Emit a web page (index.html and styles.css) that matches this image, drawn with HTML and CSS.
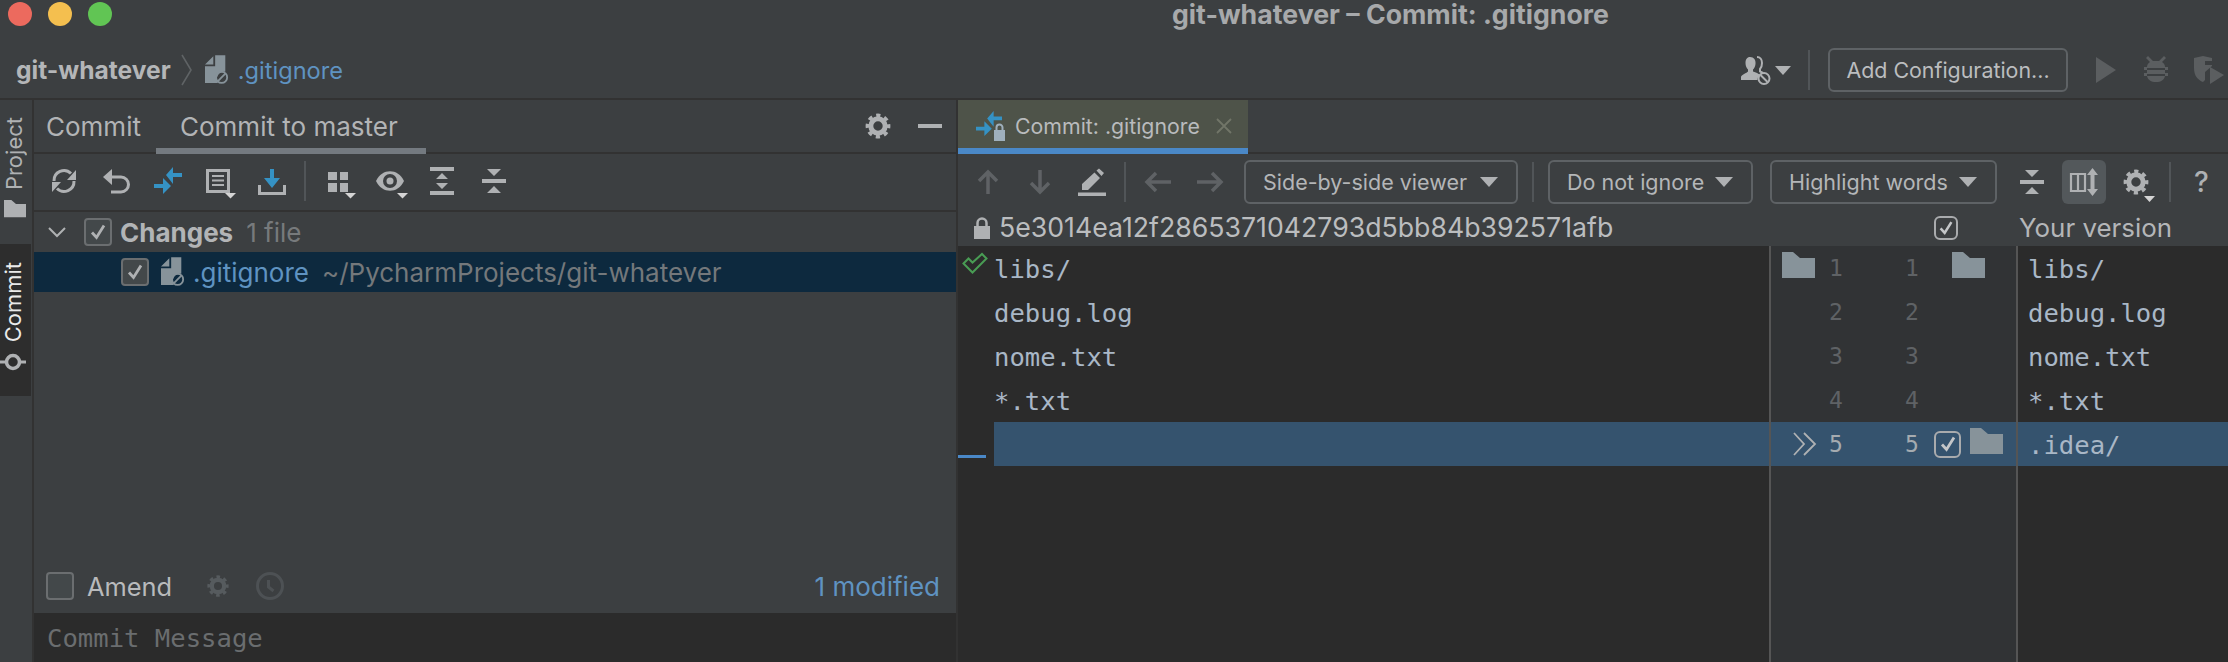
FILE: index.html
```html
<!DOCTYPE html>
<html lang="en">
<head>
<meta charset="utf-8">
<title>git-whatever – Commit: .gitignore</title>
<link rel="stylesheet" href="styles.css">
</head>
<body>
<svg class="defs" width="0" height="0" aria-hidden="true">
  <symbol id="gear" viewBox="0 0 28 28"><circle cx="14" cy="14" r="7.2" fill="none" stroke="currentColor" stroke-width="5"/><circle cx="14" cy="14" r="10.6" fill="none" stroke="currentColor" stroke-width="3.6" stroke-dasharray="4.2 4.12" stroke-dashoffset="2.1"/></symbol>
  <symbol id="folder" viewBox="0 0 33 27"><path d="M0 26V0h11l7 6h15v20z" fill="currentColor"/></symbol>
  <symbol id="check" viewBox="0 0 20 20"><path d="M4 10.5l4.5 5L16 3.5" fill="none" stroke="currentColor" stroke-width="2.8"/></symbol>
  <symbol id="file" viewBox="0 0 26 32"><path d="M0 10L9 1v9zM11 0h11v18a8 8 0 0 0-8 12H0V12h11z" fill="#87939a"/><circle cx="18" cy="24" r="6" fill="none" stroke="#87939a" stroke-width="2"/><path d="M14 28l8-8" stroke="#87939a" stroke-width="2"/></symbol>
  <symbol id="arrows" viewBox="0 0 28 28"><path d="M12 8l7-8v6h9v4h-9v7zM0 17h9v-6l8 8-8 8v-6H0z" fill="currentColor"/></symbol>
</svg>

<header class="titlebar">
  <span class="light red"></span><span class="light amber"></span><span class="light green"></span>
  <span class="window-title">git-whatever – Commit: .gitignore</span>
</header>

<nav class="navbar">
  <span class="crumb-root">git-whatever</span>
  <svg class="crumb-sep" width="12" height="32" viewBox="0 0 12 32"><path d="M1 1l9 15-9 15" fill="none" stroke="#5f6365" stroke-width="1.6"/></svg>
  <svg class="file-icon" width="24" height="30"><use href="#file"/></svg>
  <span class="file-name">.gitignore</span>
  <span class="nav-right">
    <svg width="30" height="30" viewBox="0 0 30 30"><path d="M9 2c4 0 6 3 5.500 7-.3 3-1.500 4.500-2.500 5.500v2c3 1 5.500 2 7 3.500-2 1-2.500 3-2.500 5H0v-3c0-2 6-4 7-5.500v-2C5.500 13 4.500 11 4.500 8 4.500 4.500 6 2 9 2z" fill="#afb1b3"/><path d="M16 2c3 0 5 2.500 5 6 0 3-1 5-2 6v2.500l3 1.500" fill="none" stroke="#afb1b3" stroke-width="2"/><circle cx="23" cy="23.500" r="5.500" fill="#3c3f41" stroke="#afb1b3" stroke-width="2"/><path d="M19.500 20l7 7" stroke="#afb1b3" stroke-width="2"/></svg>
    <svg class="nav-caret" width="16" height="9" viewBox="0 0 16 9"><path d="M0 0h16l-8 9z" fill="#afb1b3"/></svg>
    <i class="vsep nav-sep"></i>
    <span class="config-btn">Add Configuration...</span>
    <svg class="run" width="20" height="26" viewBox="0 0 20 26"><path d="M0 0l20 13L0 26z" fill="#5b5e60"/></svg>
    <svg class="debug" width="24" height="28" viewBox="0 0 24 28"><path d="M4 0l5 5h6l5-5 2 2-4 4c2 1 3 3 3 5h3v3h-3v3h3v3h-3c-1 4-4 6-9 6s-8-2-9-6H0v-3h3v-3H0v-3h3c0-2 1-4 3-5L2 2z" fill="#5b5e60"/><path d="M3 13h18M3 19h18" stroke="#3c3f41" stroke-width="2"/></svg>
    <svg class="coverage" width="30" height="28" viewBox="0 0 30 28"><path d="M0 2l9-2 9 2v3h-7v4h7v1l-7 6v8l-2 2C4 24 0 20 0 12z" fill="#5b5e60"/><path d="M16 11l14 8-14 9z" fill="#5b5e60"/></svg>
  </span>
</nav>

<main class="workspace">
  <aside class="stripe">
    <div class="stripe-item">
      <span class="stripe-label">Project</span>
      <svg class="stripe-folder" width="22" height="18"><use href="#folder"/></svg>
    </div>
    <div class="stripe-item active">
      <span class="stripe-label">Commit</span>
      <svg class="stripe-commit" width="26" height="18" viewBox="0 0 26 18"><path d="M0 9h6M20 9h6" stroke="#afb1b3" stroke-width="3"/><circle cx="13" cy="9" r="6.500" fill="none" stroke="#afb1b3" stroke-width="3.500"/></svg>
    </div>
  </aside>

  <section class="commit-panel">
    <div class="tabs">
      <span class="tab plain">Commit</span>
      <span class="tab current">Commit to master</span>
      <svg class="panel-gear" width="28" height="28"><use href="#gear"/></svg>
      <i class="panel-min"></i>
    </div>
    <div class="toolbar left-tools">
      <span class="btn"><svg width="28" height="28" viewBox="0 0 28 28"><path d="M4 14a10 10 0 0 1 17-7.500M24 14a10 10 0 0 1-17 7.500" fill="none" stroke="#afb1b3" stroke-width="3"/><path d="M26 3v10h-9zM2 25V15h9z" fill="#afb1b3"/></svg></span>
      <span class="btn"><svg width="28" height="28" viewBox="0 0 28 28"><path d="M9 10h10a7.500 7.500 0 0 1 0 15H9" fill="none" stroke="#afb1b3" stroke-width="3"/><path d="M1 10l9-8v16z" fill="#afb1b3"/></svg></span>
      <span class="btn blue"><svg width="28" height="28"><use href="#arrows"/></svg></span>
      <span class="btn"><svg width="28" height="28" viewBox="0 0 28 28"><path d="M1.500 3.500h21v21h-21z" fill="none" stroke="#afb1b3" stroke-width="3"/><path d="M6 9h12M6 13.500h12M6 18h12" stroke="#afb1b3" stroke-width="2"/><path d="M19 26h11l-5.500 5.500z" fill="#d4d4d4"/></svg></span>
      <span class="btn"><svg width="28" height="28" viewBox="0 0 28 28"><path d="M1.500 18v8.500h25V18" fill="none" stroke="#afb1b3" stroke-width="3"/><path d="M12 2h4v9h6l-8 10-8-10h6z" fill="#3592c4"/></svg></span>
      <i class="vsep left-sep"></i>
      <span class="btn"><svg width="28" height="28" viewBox="0 0 28 28"><path d="M4 5h9v8H4zM16 5h8v8h-8zM4 16h9v9H4zM16 16h8v9h-8z" fill="#afb1b3"/><path d="M21 26h11l-5.500 5.500z" fill="#d4d4d4"/></svg></span>
      <span class="btn"><svg width="28" height="28" viewBox="0 0 28 28"><path d="M0 14C6 1 22 1 28 14 22 27 6 27 0 14z" fill="#afb1b3"/><circle cx="14" cy="14" r="7" fill="#3c3f41"/><circle cx="14" cy="14" r="3.500" fill="#afb1b3"/><path d="M21 26h11l-5.500 5.500z" fill="#d4d4d4"/></svg></span>
      <span class="btn"><svg width="28" height="28" viewBox="0 0 28 28"><path d="M2 0h24v4H2zM2 24h24v4H2zM14 6l6 6H8zM8 16h12l-6 6z" fill="#afb1b3"/></svg></span>
      <span class="btn"><svg width="28" height="28" viewBox="0 0 28 28"><path d="M2 12h24v4H2zM7 2h14l-7 7zM14 19l7 7H7z" fill="#afb1b3"/></svg></span>
    </div>
    <div class="tree">
      <div class="tree-row group-row">
        <svg class="chev" width="18" height="10" viewBox="0 0 18 10"><path d="M1 1l8 8 8-8" fill="none" stroke="#afb1b3" stroke-width="2"/></svg>
        <span class="cb filled"><svg width="20" height="20"><use href="#check"/></svg></span>
        <b class="group-name">Changes</b>
        <span class="group-count">1 file</span>
      </div>
      <div class="tree-row selected">
        <span class="cb filled"><svg width="20" height="20"><use href="#check"/></svg></span>
        <svg class="tree-file" width="24" height="30"><use href="#file"/></svg>
        <span class="tree-name">.gitignore</span>
        <span class="tree-path">~/PycharmProjects/git-whatever</span>
      </div>
    </div>
    <div class="amend">
      <span class="cb empty"></span>
      <span class="amend-label">Amend</span>
      <svg class="amend-gear" width="24" height="24"><use href="#gear"/></svg>
      <svg class="amend-clock" width="28" height="28" viewBox="0 0 28 28"><circle cx="14" cy="14" r="12.500" fill="none" stroke="#4d5154" stroke-width="3"/><path d="M12.500 8v7l5 4" fill="none" stroke="#4d5154" stroke-width="3"/></svg>
      <span class="modified">1 modified</span>
    </div>
    <div class="message">Commit Message</div>
  </section>

  <section class="diff-panel">
    <div class="tabs">
      <span class="editor-tab">
        <svg class="tab-icon" width="30" height="30" viewBox="0 0 30 30"><use href="#arrows" width="26" height="26"/><path d="M18 19h11v11H18z" fill="#9fb0bd"/><path d="M20.500 19v-2.500a3 3 0 0 1 6 0V19" fill="none" stroke="#9fb0bd" stroke-width="2"/></svg>
        <span class="tab-text">Commit: .gitignore</span>
        <svg class="tab-close" width="16" height="16" viewBox="0 0 16 16"><path d="M1 1l14 14M15 1L1 15" stroke="#717568" stroke-width="1.800"/></svg>
      </span>
    </div>
    <div class="toolbar right-tools">
      <span class="dbtn"><svg width="28" height="28" viewBox="0 0 28 28"><path d="M14 26V5M5 13l9-9 9 9" fill="none" stroke="#5f6265" stroke-width="3.500"/></svg></span>
      <span class="dbtn"><svg width="28" height="28" viewBox="0 0 28 28"><path d="M14 2v21M5 15l9 9 9-9" fill="none" stroke="#5f6265" stroke-width="3.500"/></svg></span>
      <span class="dbtn"><svg width="28" height="28" viewBox="0 0 28 28"><path d="M0 24.500h28V28H0zM4 22v-6L16.500 4.500l5.500 5.500L10 22zM18.500 2.500l2.500-2 5 4.500-2.500 3z" fill="#afb1b3"/></svg></span>
      <i class="vsep tool-sep"></i>
      <span class="dbtn"><svg width="28" height="28" viewBox="0 0 28 28"><path d="M27 14H4M12 5l-9 9 9 9" fill="none" stroke="#5f6265" stroke-width="3.500"/></svg></span>
      <span class="dbtn"><svg width="28" height="28" viewBox="0 0 28 28"><path d="M1 14h23M16 5l9 9-9 9" fill="none" stroke="#5f6265" stroke-width="3.500"/></svg></span>
      <span class="combo viewer">Side-by-side viewer<svg width="18" height="10" viewBox="0 0 18 10"><path d="M0 0h18L9 10z" fill="#afb1b3"/></svg></span>
      <i class="vsep combo-sep"></i>
      <span class="combo ignore">Do not ignore<svg width="18" height="10" viewBox="0 0 18 10"><path d="M0 0h18L9 10z" fill="#afb1b3"/></svg></span>
      <span class="combo words">Highlight words<svg width="18" height="10" viewBox="0 0 18 10"><path d="M0 0h18L9 10z" fill="#afb1b3"/></svg></span>
      <span class="rbtn first"><svg width="28" height="28" viewBox="0 0 28 28"><path d="M2 12h24v4H2zM7 2h14l-7 7zM14 19l7 7H7z" fill="#afb1b3"/></svg></span>
      <span class="rbtn on"><svg width="32" height="30" viewBox="0 0 32 30"><path d="M3 7h14v17H3zM10 7v17" fill="none" stroke="#afb1b3" stroke-width="2.200"/><path d="M24.500 1l5.500 7h-3.500v14H30l-5.500 7-5.500-7h3.500V8H19z" fill="#afb1b3"/></svg></span>
      <span class="rbtn gear"><svg width="28" height="28"><use href="#gear"/></svg><svg class="gear-caret" width="11" height="6" viewBox="0 0 11 6"><path d="M0 0h11L5.500 6z" fill="#d4d4d4"/></svg></span>
      <i class="vsep help-sep"></i>
      <span class="help">?</span>
    </div>
    <div class="versions">
      <div class="base">
        <svg width="16" height="22" viewBox="0 0 16 22"><path d="M0 9h16v13H0z" fill="#afb1b3"/><path d="M3.500 10V6a4.500 4.500 0 0 1 9 0v4" fill="none" stroke="#afb1b3" stroke-width="2.500"/></svg>
        <span class="hash">5e3014ea12f2865371042793d5bb84b392571afb</span>
      </div>
      <div class="mid"><span class="cb outline small"><svg width="18" height="18"><use href="#check"/></svg></span></div>
      <div class="yours">Your version</div>
    </div>
    <div class="editor">
      <div class="pane base-pane">
        <div class="line"><span class="marker"><svg width="26" height="21" viewBox="0 0 26 21"><path d="M1.500 10.500l5-5 4 4L20 1l4.500 4.500L10.500 19.500z" fill="none" stroke="#499c54" stroke-width="2"/></svg></span><span class="code">libs/</span></div>
        <div class="line"><span class="marker"></span><span class="code">debug.log</span></div>
        <div class="line"><span class="marker"></span><span class="code">nome.txt</span></div>
        <div class="line"><span class="marker"></span><span class="code">*.txt</span></div>
        <div class="line"><span class="marker"><i class="caret-mark"></i></span><span class="code hl"></span></div>
      </div>
      <div class="gutter">
        <div class="gline"><span class="gl-left"><svg width="33" height="27"><use href="#folder"/></svg></span><span class="num">1</span><span class="num">1</span><span class="gl-right with-folder"><svg width="33" height="27"><use href="#folder"/></svg></span></div>
        <div class="gline"><span class="gl-left"></span><span class="num">2</span><span class="num">2</span><span class="gl-right"></span></div>
        <div class="gline"><span class="gl-left"></span><span class="num">3</span><span class="num">3</span><span class="gl-right"></span></div>
        <div class="gline"><span class="gl-left"></span><span class="num">4</span><span class="num">4</span><span class="gl-right"></span></div>
        <div class="gline hl"><span class="gl-left"><svg class="apply" width="23" height="24" viewBox="0 0 23 24"><path d="M1 1l10 11L1 23M11 1l11 11-11 11" fill="none" stroke="#afb1b3" stroke-width="1.800"/></svg></span><span class="num">5</span><span class="num">5</span><span class="gl-right with-box"><span class="cb outline"><svg width="20" height="20"><use href="#check"/></svg></span><svg class="row-folder" width="33" height="27"><use href="#folder"/></svg></span></div>
      </div>
      <div class="pane your-pane">
        <div class="line"><span class="code">libs/</span></div>
        <div class="line"><span class="code">debug.log</span></div>
        <div class="line"><span class="code">nome.txt</span></div>
        <div class="line"><span class="code">*.txt</span></div>
        <div class="line"><span class="code hl">.idea/</span></div>
      </div>
    </div>
  </section>
</main>
</body>
</html>
```

FILE: styles.css
```css
* { box-sizing: border-box; }
html, body { margin: 0; height: 100%; }
body {
  width: 2228px; height: 662px; overflow: hidden;
  background: #3c3f41; color: #afb1b3;
  font-family: Inter, "Liberation Sans", sans-serif; font-size: 26px;
}
.defs { position: absolute; }
svg { display: block; flex: none; overflow: visible; }

.titlebar { display: flex; align-items: center; height: 28px; padding-left: 8px; gap: 16px; }
.light { width: 24px; height: 24px; border-radius: 50%; }
.red { background: #ec6a5e; } .amber { background: #f4bf4f; } .green { background: #61c554; }
.window-title { margin-left: 1044px; font-weight: 700; font-size: 26.7px; color: #a7a9ab; white-space: nowrap; line-height: 26px; }

.navbar { display: flex; align-items: center; height: 72px; padding: 14px 0 0 16px; border-bottom: 2px solid #323232; }
.crumb-root { font-weight: 700; font-size: 24.6px; color: #b4b6b8; }
.crumb-sep { margin-left: 10px; }
.file-icon { margin-left: 12px; }
.file-name { margin-left: 9px; font-size: 23.6px; color: #5f93c1; }
.nav-right { margin-left: auto; display: flex; align-items: center; }
.nav-caret { margin-left: 4px; }
.vsep { display: block; width: 2px; background: #515558; flex: none; }
.nav-sep { height: 40px; margin-left: 17px; }
.config-btn { width: 240px; height: 44px; margin-left: 18px; border: 2px solid #5e6265; border-radius: 6px; display: flex; align-items: center; justify-content: center; white-space: nowrap; font-size: 21.4px; color: #bbbdbf; }
.run { margin-left: 28px; } .debug { margin-left: 28px; } .coverage { margin: 0 4px 0 26px; }

.workspace { display: grid; grid-template-columns: 34px 924px 1fr; height: 562px; }
.stripe { border-right: 2px solid #323232; display: flex; flex-direction: column; }
.stripe-item { display: flex; flex-direction: column; align-items: center; height: 118px; padding: 17px 5px 0 0; }
.stripe-label { writing-mode: vertical-rl; transform: rotate(180deg); font-size: 22px; line-height: 22px; white-space: nowrap; }
.stripe-folder { margin: auto -3px 0 0; color: #afb1b3; }
.stripe-item.active { margin: 26px -2px 0 0; padding: 18px 5px 25px 0; height: 152px; width: 31px; background: #2d2d2d; }
.stripe-item.active .stripe-label { color: #eaeaea; }
.stripe-commit { margin: auto 0 0 0; }

.commit-panel { display: flex; flex-direction: column; border-right: 2px solid #323232; min-width: 0; }
.tabs { display: flex; align-items: center; height: 54px; border-bottom: 2px solid #323232; flex: none; }
.tab { white-space: nowrap; color: #b2b4b6; }
.tab.plain { padding: 0 0 0 12px; width: 122px; }
.tab.current { width: 270px; height: 54px; margin-bottom: -2px; padding: 4px 0 0 24px; display: flex; align-items: center; border-bottom: 6px solid #747a80; }
.panel-gear { margin-left: auto; color: #afb1b3; }
.panel-min { display: block; width: 24px; height: 4px; background: #afb1b3; margin: 0 14px 0 26px; }

.toolbar { display: flex; align-items: center; flex: none; }
.left-tools { height: 58px; padding: 0 0 2px 4px; border-bottom: 2px solid #323232; }
.btn { width: 52px; display: flex; justify-content: center; }
.btn.blue { color: #3592c4; }
.left-sep { height: 40px; margin: 0 6px; }

.tree { flex: 1; }
.tree-row { display: flex; align-items: center; height: 40px; white-space: nowrap; }
.group-row { padding-left: 14px; }
.chev { margin-right: 18px; }
.cb { display: flex; align-items: center; justify-content: center; width: 28px; height: 28px; border-radius: 4px; border: 2px solid #6b6e70; flex: none; }
.cb.filled { background: #43484a; color: #afb1b3; }
.cb.empty { background: #43484a; }
.cb.outline { border-color: #a9abad; color: #c4c6c8; width: 27px; height: 27px; border-radius: 6px; }
.cb.small { width: 24px; height: 24px; }
.group-name { margin-left: 8px; color: #b2b4b6; }
.group-count { margin-left: 13px; color: #777a7c; }
.selected { background: #0d293e; padding-left: 87px; }
.tree-file { margin-left: 12px; }
.tree-name { margin-left: 8px; color: #5f93c1; }
.tree-path { margin-left: 13px; color: #74787b; }

.amend { display: flex; align-items: center; height: 54px; padding: 0 16px 0 12px; flex: none; }
.amend-label { margin-left: 13px; font-size: 25.4px; color: #b8babc; }
.amend-gear { margin-left: 34px; color: #565b5e; }
.amend-clock { margin-left: 26px; }
.modified { margin-left: auto; color: #5f93c1; }
.message { height: 49px; background: #2b2b2b; padding: 10px 0 0 13px; font: 25.6px/30px "DejaVu Sans Mono", monospace; color: #6a6d6f; flex: none; }

.diff-panel { display: flex; flex-direction: column; min-width: 0; }
.editor-tab { display: flex; align-items: center; width: 290px; height: 54px; margin-bottom: -2px; padding: 4px 0 0 18px; background: #4e5349; border-bottom: 6px solid #4a88c7; }
.tab-icon { color: #3592c4; }
.tab-text { margin-left: 9px; font-size: 21.3px; color: #b9bbbd; white-space: nowrap; }
.tab-close { margin-left: auto; margin-right: 16px; }

.right-tools { height: 56px; padding-left: 4px; font-size: 21.5px; }
.dbtn { width: 52px; display: flex; justify-content: center; }
.tool-sep { height: 40px; margin: 0 6px; }
.combo { display: flex; align-items: center; justify-content: space-between; height: 44px; padding: 0 18px 0 17px; border: 2px solid #5e6265; border-radius: 6px; white-space: nowrap; color: #b4b6b8; }
.viewer { width: 274px; margin-left: 8px; }
.combo-sep { height: 40px; margin: 0 14px; }
.ignore { width: 205px; }
.words { width: 227px; margin-left: 17px; }
.rbtn { display: flex; align-items: center; justify-content: center; width: 44px; height: 44px; border-radius: 6px; }
.rbtn.first { margin-left: 13px; }
.rbtn.on { margin-left: 8px; background: #53585b; }
.rbtn.gear { margin-left: 8px; color: #afb1b3; position: relative; }
.gear-caret { position: absolute; left: 30px; top: 36px; }
.help-sep { height: 40px; margin-left: 11px; }
.help { margin-left: 23px; font-size: 28px; font-weight: 500; color: #afb1b3; }

.versions { display: grid; grid-template-columns: 811px 249px 1fr; height: 36px; align-items: center; flex: none; }
.base { display: flex; align-items: center; padding-left: 16px; }
.hash { margin: -2px 0 0 9px; font-size: 26.7px; white-space: nowrap; color: #bbbdbf; }
.mid { padding-left: 165px; }
.yours { margin-top: -2px; padding-left: 1px; font-size: 25.9px; color: #b4b6b8; }

.editor { display: grid; grid-template-columns: 811px 249px 1fr; flex: 1; background: #2b2b2b; min-height: 0; }
.line { display: flex; height: 44px; }
.marker { width: 36px; flex: none; padding: 7px 0 0 4px; position: relative; }
.caret-mark { display: block; position: absolute; left: 0; right: 8px; bottom: 8px; height: 3px; background: #4a88c7; }
.code { flex: 1; padding-top: 2px; font: 25.6px/42px "DejaVu Sans Mono", monospace; color: #a9b7c6; white-space: pre; }
.code.hl { background: #35536e; }
.your-pane .code { padding-left: 10px; }
.gutter { background: #313335; border-left: 2px solid #555; border-right: 2px solid #555; }
.gline { display: grid; grid-template-columns: 58px 76px 27px 1fr; height: 44px; align-items: center; color: #87939a; }
.gline.hl { background: #35536e; }
.gl-left { padding-left: 11px; display: block; }
.gl-left .apply { margin-left: 11px; }
.num { font: 23px/44px "DejaVu Sans Mono", monospace; color: #5f6265; }
.gline.hl .num { color: #a5abb0; }
.gl-right { display: flex; align-items: center; }
.with-folder { padding: 0 0 6px 20px; }
.with-box { padding-left: 2px; }
.row-folder { margin: -6px 0 0 9px; }
.gline:first-child .gl-left { padding-bottom: 6px; }
```
